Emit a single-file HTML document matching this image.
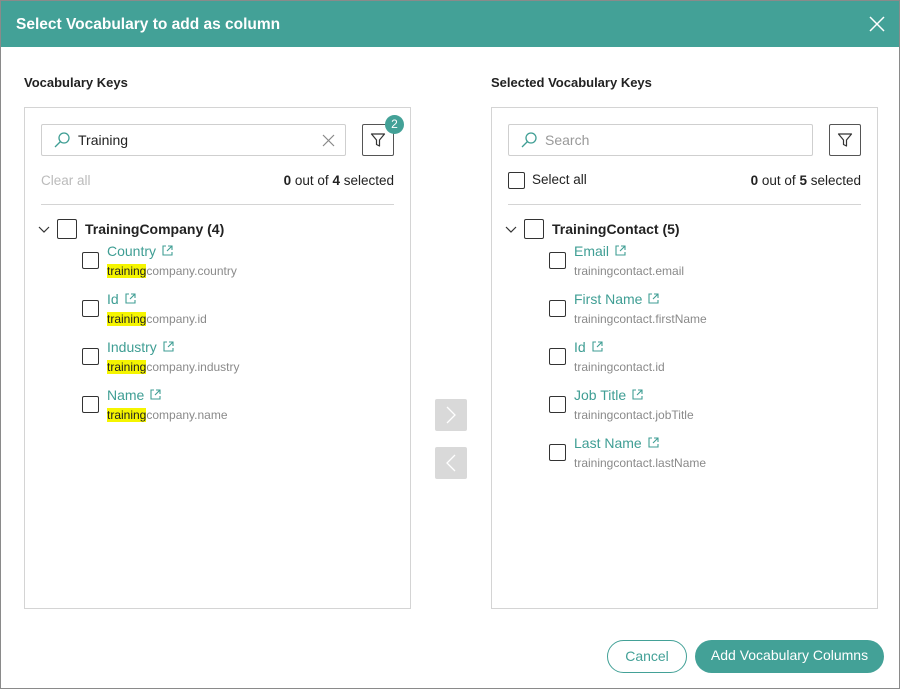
<!DOCTYPE html>
<html><head><style>
*{box-sizing:border-box;margin:0;padding:0}
body{width:900px;height:689px;background:#fff;font-family:"Liberation Sans",sans-serif;position:relative;overflow:hidden}
.a{position:absolute}
.frame{left:0;top:0;width:900px;height:689px;border:1px solid #8a8a8a;pointer-events:none}
.hdr{left:0;top:0;width:900px;height:47px;background:#43a197;color:#fff;font-weight:bold;font-size:15.5px;padding:16px 0 0 16px}
.t{font-size:13px;font-weight:bold;color:#222}
.panel{border:1px solid #d4d4d4}
.search{border:1px solid #cfcfcf;height:32px;border-radius:2px}
.fbtn{width:32px;height:32px;border:1px solid #555;border-radius:2px;background:#fff}
.cb{width:17px;height:17px;border:1.5px solid #333;border-radius:2px;background:#fff}
.cbg{width:20px;height:20px;border:1.5px solid #333;border-radius:2px}
.lbl{font-size:14px;color:#3f9e94}
.sub{font-size:12px;color:#8a8a8a}
.hl{background:#f5f500;color:#222}
.btn{border-radius:17px;height:33px;font-size:14px;text-align:center;line-height:31px}
.cnt{font-size:13.5px;color:#222;text-align:right;width:200px}
</style></head><body>
<div class="a hdr">Select Vocabulary to add as column</div>
<svg class="a" style="left:869px;top:16px" width="16" height="16"><path d="M1 1L15 15M15 1L1 15" stroke="#fff" stroke-width="1.5"/></svg>

<div class="a t" style="left:24px;top:75px">Vocabulary Keys</div>
<div class="a t" style="left:491px;top:75px">Selected Vocabulary Keys</div>

<div class="a panel" style="left:24px;top:107px;width:387px;height:502px"></div>
<div class="a panel" style="left:491px;top:107px;width:387px;height:502px"></div>

<div class="a search" style="left:41px;top:124px;width:305px"></div>
<svg class="a" style="left:53px;top:131px" width="18" height="18"><circle cx="11" cy="7" r="5" fill="none" stroke="#3f9e94" stroke-width="1.3"/><path d="M7.5 10.5L2 16" stroke="#3f9e94" stroke-width="1.3"/></svg>
<div class="a" style="left:78px;top:132px;font-size:14px;color:#222">Training</div>
<svg class="a" style="left:322px;top:134px" width="13" height="13"><path d="M1 1L12 12M12 1L1 12" stroke="#888" stroke-width="1.2"/></svg>
<div class="a fbtn" style="left:362px;top:124px"></div>
<svg class="a" style="left:370px;top:132px" width="16" height="16"><path d="M1.5 2H14.5L9.5 8V14L6.5 12.5V8Z" fill="none" stroke="#333" stroke-width="1.2" stroke-linejoin="round"/></svg>
<div class="a" style="left:385px;top:115px;width:19px;height:19px;border-radius:50%;background:#43a197;color:#fff;font-size:12px;text-align:center;line-height:19px">2</div>
<div class="a" style="left:41px;top:173px;font-size:13.5px;color:#bbb">Clear all</div>
<div class="a cnt" style="left:194px;top:173px"><b>0</b> out of <b>4</b> selected</div>
<div class="a" style="left:41px;top:204px;width:353px;height:1px;background:#d4d4d4"></div>
<svg class="a" style="left:38px;top:225px" width="12" height="10"><path d="M1 2L6 7L11 2" fill="none" stroke="#333" stroke-width="1.2"/></svg>
<div class="a cbg" style="left:57px;top:219px"></div>
<div class="a t" style="left:85px;top:221px;font-size:14px">TrainingCompany (4)</div>

<div class="a search" style="left:508px;top:124px;width:305px"></div>
<svg class="a" style="left:520px;top:131px" width="18" height="18"><circle cx="11" cy="7" r="5" fill="none" stroke="#3f9e94" stroke-width="1.3"/><path d="M7.5 10.5L2 16" stroke="#3f9e94" stroke-width="1.3"/></svg>
<div class="a" style="left:545px;top:132px;font-size:14px;color:#999">Search</div>
<div class="a fbtn" style="left:829px;top:124px"></div>
<svg class="a" style="left:837px;top:132px" width="16" height="16"><path d="M1.5 2H14.5L9.5 8V14L6.5 12.5V8Z" fill="none" stroke="#333" stroke-width="1.2" stroke-linejoin="round"/></svg>
<div class="a cb" style="left:508px;top:172px"></div>
<div class="a" style="left:532px;top:172px;font-size:13.5px;color:#222">Select all</div>
<div class="a cnt" style="left:661px;top:173px"><b>0</b> out of <b>5</b> selected</div>
<div class="a" style="left:508px;top:204px;width:353px;height:1px;background:#d4d4d4"></div>
<svg class="a" style="left:505px;top:225px" width="12" height="10"><path d="M1 2L6 7L11 2" fill="none" stroke="#333" stroke-width="1.2"/></svg>
<div class="a cbg" style="left:524px;top:219px"></div>
<div class="a t" style="left:552px;top:221px;font-size:14px">TrainingContact (5)</div>

<div id="items"></div>

<div class="a" style="left:435px;top:399px;width:32px;height:32px;background:#d9d9d9;border-radius:2px"></div>
<svg class="a" style="left:445px;top:406px" width="12" height="18"><path d="M2 1L10 9L2 17" fill="none" stroke="#fff" stroke-width="1.3"/></svg>
<div class="a" style="left:435px;top:447px;width:32px;height:32px;background:#d9d9d9;border-radius:2px"></div>
<svg class="a" style="left:445px;top:454px" width="12" height="18"><path d="M10 1L2 9L10 17" fill="none" stroke="#fff" stroke-width="1.3"/></svg>

<div class="a btn" style="left:607px;top:640px;width:80px;border:1.3px solid #43a197;color:#43a197">Cancel</div>
<div class="a btn" style="left:695px;top:640px;width:189px;background:#43a197;color:#fff">Add Vocabulary Columns</div>
<div class="a frame"></div>

<script>
const L=[["Country","country"],["Id","id"],["Industry","industry"],["Name","name"]];
const R=[["Email","email"],["First Name","firstName"],["Id","id"],["Job Title","jobTitle"],["Last Name","lastName"]];
const ext='<svg width="11" height="11" style="margin-left:6px;vertical-align:0"><path d="M4 1H1V10H10V7M6 1H10V5M10 1L5 6" fill="none" stroke="#3f9e94" stroke-width="1.1"/></svg>';
let h='';
L.forEach((e,i)=>{const y=243+i*48;
h+=`<div class="a cb" style="left:82px;top:${y+9}px"></div><div class="a lbl" style="left:107px;top:${y}px">${e[0]}${ext}</div><div class="a sub" style="left:107px;top:${y+21}px"><span class="hl">training</span>company.${e[1]}</div>`;});
R.forEach((e,i)=>{const y=243+i*48;
h+=`<div class="a cb" style="left:549px;top:${y+9}px"></div><div class="a lbl" style="left:574px;top:${y}px">${e[0]}${ext}</div><div class="a sub" style="left:574px;top:${y+21}px">trainingcontact.${e[1]}</div>`;});
document.getElementById('items').innerHTML=h;
</script>
</body></html>
